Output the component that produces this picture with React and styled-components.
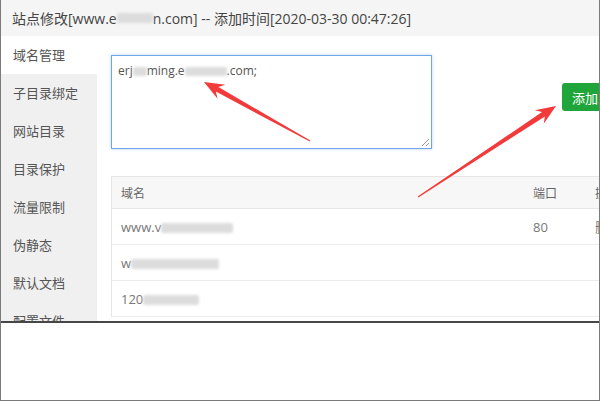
import styled, { createGlobalStyle } from 'styled-components'

const GlobalStyle = createGlobalStyle`
  html, body {
    margin: 0;
    padding: 0;
    background: #fff;
  }
  body {
    font-family: 'Open Sans', 'Noto Sans CJK SC', sans-serif;
  }
`

const Frame = styled.div`
  position: relative;
  width: 600px;
  height: 401px;
  box-sizing: border-box;
  border: 1px solid #7b7b7b;
  border-top: none;
  background: #fff;
  overflow: hidden;
`

const Dialog = styled.div`
  height: 323px;
  box-sizing: border-box;
  border-bottom: 2px solid #474747;
  display: flex;
  flex-direction: column;
  overflow: hidden;
`

const TitleBar = styled.div`
  height: 36px;
  flex: none;
  background: #f5f5f5;
  display: flex;
  align-items: center;
  padding-left: 11px;
  font-size: 14px;
  color: #444;
  white-space: nowrap;
`

const Body = styled.div`
  flex: 1;
  display: flex;
  min-height: 0;
`

const Sidebar = styled.ul`
  width: 96px;
  flex: none;
  margin: 0;
  padding: 0;
  list-style: none;
  background: #f0f0f0;
`

const NavItem = styled.li`
  height: 38px;
  line-height: 38px;
  padding-left: 12px;
  font-size: 13px;
  color: #555;
  background: ${(p) => (p.active ? '#fff' : 'transparent')};
`

const Content = styled.div`
  flex: 1;
  padding: 19px 0 0 14px;
  min-width: 0;
`

const InputRow = styled.div`
  display: flex;
  align-items: flex-start;
`

const FakeTextarea = styled.div`
  position: relative;
  flex: none;
  width: 321px;
  height: 94px;
  box-sizing: border-box;
  border: 1px solid #6fa6e6;
  box-shadow: 0 0 3px rgba(100, 160, 230, 0.45);
  padding: 6px 6px;
  font-size: 12px;
  color: #555;
  white-space: nowrap;
  &::after {
    content: '';
    position: absolute;
    right: 2px;
    bottom: 2px;
    width: 7px;
    height: 7px;
    background: linear-gradient(
      135deg,
      transparent 45%,
      #999 45%,
      #999 55%,
      transparent 55%,
      transparent 75%,
      #999 75%,
      #999 85%,
      transparent 85%
    );
  }
`

const AddButton = styled.button`
  margin: 28px 0 0 130px;
  height: 28px;
  width: 60px;
  flex: none;
  border: none;
  border-radius: 3px;
  background: #20a53a;
  color: #fff;
  font-size: 13px;
  font-family: inherit;
  text-align: left;
  padding: 0 10px;
`

const Table = styled.table`
  margin-top: 27px;
  width: 520px;
  border-collapse: collapse;
  border: 1px solid #e6e6e6;
  font-size: 12px;
  color: #666;
  th,
  td {
    text-align: left;
    font-weight: normal;
    padding: 0 9px;
    white-space: nowrap;
  }
  th {
    height: 31px;
    background: #f7f7f7;
    border-bottom: 1px solid #e6e6e6;
  }
  td {
    height: 35px;
    border-bottom: 1px solid #ececec;
    font-size: 13px;
    color: #777;
  }
`

const Blur = styled.span`
  display: inline-block;
  vertical-align: middle;
  width: ${(p) => p.w}px;
  height: ${(p) => p.h || 10}px;
  background: #dcdcdc;
  filter: blur(1.5px);
  border-radius: 2px;
`

const Overlay = styled.svg`
  position: absolute;
  left: 0;
  top: 0;
  pointer-events: none;
`

const arrowPoints = (x1, y1, x2, y2) => {
  const dx = x2 - x1
  const dy = y2 - y1
  const len = Math.hypot(dx, dy)
  const ux = dx / len
  const uy = dy / len
  const nx = -uy
  const ny = ux
  const head = 20
  const barb = 8
  const neck = 2.6
  const tail = 0.6
  const bx = x2 - ux * head
  const by = y2 - uy * head
  const nbx = x2 - ux * (head - 5)
  const nby = y2 - uy * (head - 5)
  const pts = [
    [x1 + nx * tail, y1 + ny * tail],
    [nbx + nx * neck, nby + ny * neck],
    [bx + nx * barb, by + ny * barb],
    [x2, y2],
    [bx - nx * barb, by - ny * barb],
    [nbx - nx * neck, nby - ny * neck],
    [x1 - nx * tail, y1 - ny * tail]
  ]
  return pts.map((p) => p.join(',')).join(' ')
}

const navItems = ['域名管理', '子目录绑定', '网站目录', '目录保护', '流量限制', '伪静态', '默认文档', '配置文件']

const App = () => {
  return (
    <>
      <GlobalStyle />
      <Frame>
        <Dialog>
          <TitleBar>
            站点修改[www.e<Blur w={36} />n.com] -- 添加时间[2020-03-30 00:47:26]
          </TitleBar>
          <Body>
            <Sidebar>
              {navItems.map((item, i) => (
                <NavItem key={item} active={i === 0}>
                  {item}
                </NavItem>
              ))}
            </Sidebar>
            <Content>
              <InputRow>
                <FakeTextarea>
                  erj<Blur w={14} h={9} />ming.e<Blur w={42} h={9} />.com;
                </FakeTextarea>
                <AddButton>添加</AddButton>
              </InputRow>
              <Table>
                <thead>
                  <tr>
                    <th style={{ width: 395 }}>域名</th>
                    <th style={{ width: 44 }}>端口</th>
                    <th>操作</th>
                  </tr>
                </thead>
                <tbody>
                  <tr>
                    <td>
                      www.v<Blur w={72} />
                    </td>
                    <td>80</td>
                    <td>删除</td>
                  </tr>
                  <tr>
                    <td>
                      w<Blur w={88} />
                    </td>
                    <td></td>
                    <td></td>
                  </tr>
                  <tr>
                    <td>
                      120<Blur w={56} />
                    </td>
                    <td></td>
                    <td></td>
                  </tr>
                </tbody>
              </Table>
            </Content>
          </Body>
        </Dialog>
        <Overlay width='600' height='401'>
          <polygon points={arrowPoints(309, 141, 203, 82)} fill='#f23a3a' />
          <polygon points={arrowPoints(417, 197, 555, 106)} fill='#f23a3a' />
        </Overlay>
      </Frame>
    </>
  )
}

export default App
